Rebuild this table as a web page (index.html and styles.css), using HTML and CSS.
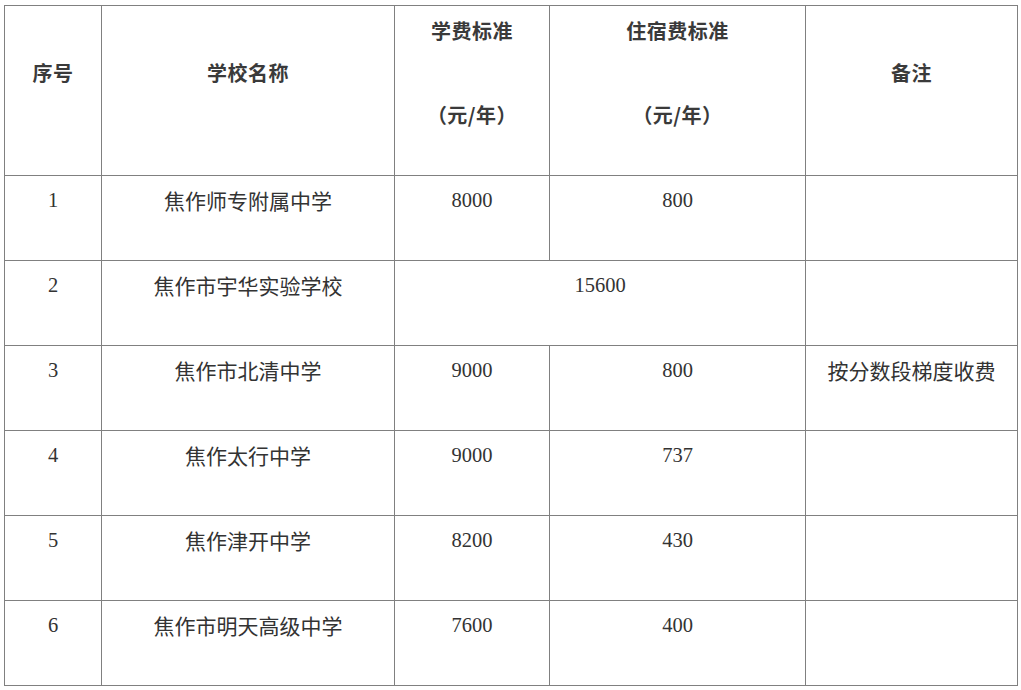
FILE: index.html
```html
<!DOCTYPE html>
<html lang="zh-CN">
<head>
<meta charset="utf-8">
<title>学费标准</title>
<link rel="stylesheet" href="styles.css">
</head>
<body>
<div class="wrap">
<table class="fees">
  <colgroup>
    <col class="c1"><col class="c2"><col class="c3"><col class="c4"><col class="c5">
  </colgroup>
  <thead>
    <tr class="head">
      <th><div class="hcell"><span class="blank"></span><span>序号</span></div></th>
      <th><div class="hcell"><span class="blank"></span><span>学校名称</span></div></th>
      <th><div class="hcell"><span>学费标准</span><span class="blank"></span><span>（元/年）</span></div></th>
      <th><div class="hcell"><span>住宿费标准</span><span class="blank"></span><span>（元/年）</span></div></th>
      <th><div class="hcell"><span class="blank"></span><span>备注</span></div></th>
    </tr>
  </thead>
  <tbody>
    <tr><td class="num">1</td><td class="cn">焦作师专附属中学</td><td class="num">8000</td><td class="num">800</td><td class="cn"></td></tr>
    <tr><td class="num">2</td><td class="cn">焦作市宇华实验学校</td><td class="num" colspan="2">15600</td><td class="cn"></td></tr>
    <tr><td class="num">3</td><td class="cn">焦作市北清中学</td><td class="num">9000</td><td class="num">800</td><td class="cn">按分数段梯度收费</td></tr>
    <tr><td class="num">4</td><td class="cn">焦作太行中学</td><td class="num">9000</td><td class="num">737</td><td class="cn"></td></tr>
    <tr><td class="num">5</td><td class="cn">焦作津开中学</td><td class="num">8200</td><td class="num">430</td><td class="cn"></td></tr>
    <tr><td class="num">6</td><td class="cn">焦作市明天高级中学</td><td class="num">7600</td><td class="num">400</td><td class="cn"></td></tr>
  </tbody>
</table>
</div>
</body>
</html>
```
FILE: styles.css
```css
html, body {
  margin: 0;
  padding: 0;
  background: #ffffff;
}
.wrap {
  padding: 5px 0 0 4px;
}
.fees {
  border-collapse: collapse;
  table-layout: fixed;
  width: 1013px;
  color: #333333;
}
.c1 { width: 97px; }
.c2 { width: 293px; }
.c3 { width: 155px; }
.c4 { width: 256px; }
.c5 { width: 212px; }
.fees th, .fees td {
  border: 1px solid #808080;
  padding: 0;
  text-align: center;
  vertical-align: top;
}
.head th {
  height: 169px;
  font-family: "Noto Sans CJK SC", sans-serif;
  font-weight: bold;
  font-size: 20px;
  letter-spacing: 0.5px;
  color: #3a3a3a;
}
.hcell {
  display: flex;
  flex-direction: column;
  align-items: center;
  padding-top: 4px;
}
.hcell span {
  display: block;
  height: 42px;
  line-height: 42px;
}
.fees tbody td {
  height: 85px;
  line-height: 42px;
  padding-top: 3px;
  box-sizing: border-box;
}
.fees td.num {
  font-family: "Liberation Serif", "Times New Roman", serif;
  font-size: 20.5px;
}
.fees td.cn {
  font-family: "Noto Sans CJK SC", sans-serif;
  font-size: 21px;
}
```
